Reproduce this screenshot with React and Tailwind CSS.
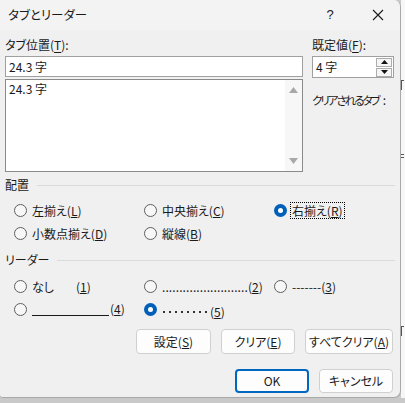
import React from "react";

const F = { fontFamily: '"Noto Sans CJK JP", "Noto Sans", sans-serif' };

function Radio({ checked }) {
  return checked ? (
    <span className="w-[13px] h-[13px] rounded-full bg-[#005fb8] flex items-center justify-center shrink-0">
      <span className="w-[5px] h-[5px] rounded-full bg-white" />
    </span>
  ) : (
    <span className="w-[13px] h-[13px] rounded-full border border-[#5f5f5f] bg-[#f7f7f7] shrink-0" />
  );
}

function Opt({ checked, children, focus }) {
  return (
    <div className="flex items-center gap-[5px] h-[23px] whitespace-nowrap">
      <Radio checked={checked} />
      <span className={focus ? "outline outline-1 outline-dotted outline-black px-[1px] -ml-[1px] leading-[15px]" : "leading-[15px]"}>
        {children}
      </span>
    </div>
  );
}

function Btn({ children, cls = "", def }) {
  return (
    <div
      className={
        "flex items-center justify-center rounded-[4px] bg-[#fdfdfd] text-[12px] whitespace-nowrap " +
        (def ? "border-2 border-[#0067c0] " : "border border-[#d0d0d0] ") +
        cls
      }
    >
      {children}
    </div>
  );
}

function Section({ title, cls = "" }) {
  return (
    <div className={"flex items-center h-[16px] " + cls}>
      <span>{title}</span>
      <span className="flex-1 h-px bg-[#dadada] ml-[8px] mr-[5px]" />
    </div>
  );
}

export default function App() {
  return (
    <div className="w-[405px] h-[403px] bg-[#c9c9c9] flex text-[12px] text-[#1a1a1a] [font-feature-settings:'palt']" style={F}>
      <div className="w-[401px] h-[398px] bg-[#f0f0f0] border-r border-b border-[#a8a8a8] rounded-tr-[7px] rounded-br-[7px] rounded-bl-[3px] overflow-hidden flex flex-col shrink-0">
        {/* title bar */}
        <div className="h-[30px] bg-[#f3f3f3] flex items-center pl-[8px] shrink-0">
          <span className="text-[12.5px]">タブとリーダー</span>
          <span className="ml-auto w-[12px] text-center text-[13px] mr-[36px]" style={{ fontFamily: '"Liberation Sans", sans-serif' }}>?</span>
          <svg width="12" height="12" viewBox="0 0 12 12" className="mr-[16px]">
            <path d="M1 1 L11 11 M11 1 L1 11" stroke="#1a1a1a" strokeWidth="1.1" />
          </svg>
        </div>

        <div className="flex flex-col pl-[5px]">
          {/* top area */}
          <div className="flex mt-[7px]">
            <div className="w-[298px] flex flex-col">
              <div className="h-[16px] leading-[16px]">
                タブ位置(<u className="underline-offset-2">T</u>):
              </div>
              <div className="mt-[3px] h-[21px] bg-white border border-[#a0a0a0] flex items-center pl-[3px]">24.3 字</div>
              <div className="mt-[2px] h-[93px] bg-white border border-[#8a8a8a] flex">
                <div className="flex-1 pl-[3px] pt-[1px] leading-[16px]">24.3 字</div>
                <div className="w-[17px] bg-[#f7f7f7] flex flex-col items-center justify-between py-[7px]">
                  <svg width="9" height="6" viewBox="0 0 9 6"><path d="M0 6 L4.5 0 L9 6 Z" fill="#a8a8a8" /></svg>
                  <svg width="9" height="6" viewBox="0 0 9 6"><path d="M0 0 L4.5 6 L9 0 Z" fill="#a8a8a8" /></svg>
                </div>
              </div>
            </div>
            <div className="ml-[9px] w-[82px] flex flex-col">
              <div className="h-[16px] leading-[16px]">
                既定値(<u className="underline-offset-2">F</u>):
              </div>
              <div className="mt-[3px] h-[22px] bg-white border border-[#a0a0a0] flex items-center pl-[3px]">
                <span className="flex-1">4 字</span>
                <div className="flex flex-col gap-[1px] mr-[1px]">
                  <div className="w-[16px] h-[9px] border border-[#adadad] bg-[#f5f5f5] flex items-center justify-center">
                    <svg width="7" height="4" viewBox="0 0 7 4"><path d="M0 4 L3.5 0 L7 4 Z" fill="#111" /></svg>
                  </div>
                  <div className="w-[16px] h-[9px] border border-[#adadad] bg-[#f5f5f5] flex items-center justify-center">
                    <svg width="7" height="4" viewBox="0 0 7 4"><path d="M0 0 L3.5 4 L7 0 Z" fill="#111" /></svg>
                  </div>
                </div>
              </div>
              <div className="mt-[14px] h-[16px] leading-[16px] whitespace-nowrap">
                <span className="text-[11.5px] tracking-[-2px]">クリアされるタブ</span>
                <span className="ml-[4px]">:</span>
              </div>
            </div>
          </div>

          {/* 配置 */}
          <Section title="配置" cls="mt-[5px]" />
          <div className="grid grid-cols-[130px_130px_120px] pl-[9px] mt-[6px]">
            <Opt>左揃え(<u>L</u>)</Opt>
            <Opt>中央揃え(<u>C</u>)</Opt>
            <Opt checked focus>右揃え(<u>R</u>)</Opt>
            <Opt>小数点揃え(<u>D</u>)</Opt>
            <Opt>縦線(<u>B</u>)</Opt>
          </div>

          {/* リーダー */}
          <Section title="リーダー" cls="mt-[7px]" />
          <div className="grid grid-cols-[130px_130px_120px] pl-[9px] mt-[7px]">
            <Opt>
              なし<span className="ml-[22px]">(<u>1</u>)</span>
            </Opt>
            <Opt>
              <span className="tracking-[0.1px]">.........................</span>(<u>2</u>)
            </Opt>
            <Opt>-------(<u>3</u>)</Opt>
            <Opt>
              <span className="inline-flex items-end">
                <span className="inline-block w-[77px] h-[13px] border-b border-[#1a1a1a] mr-[1px]" />
                <span>(<u>4</u>)</span>
              </span>
            </Opt>
            <Opt checked>
              <span className="inline-flex items-center">
                <span className="inline-flex items-center gap-[4px] mr-[3px] ml-[1px]">
                  {[0, 1, 2, 3, 4, 5, 6, 7].map((i) => (
                    <span key={i} className="w-[2px] h-[2px] bg-[#333]" />
                  ))}
                </span>
                <span>(<u>5</u>)</span>
              </span>
            </Opt>
          </div>

          {/* buttons */}
          <div className="flex justify-end gap-[10px] mt-[8px] pr-[7px]">
            <Btn cls="w-[75px] h-[25px]">設定(<u>S</u>)</Btn>
            <Btn cls="w-[74px] h-[25px]">クリア(<u>E</u>)</Btn>
            <Btn cls="w-[88px] h-[25px]">すべてクリア(<u>A</u>)</Btn>
          </div>
          <div className="flex justify-end gap-[10px] mt-[15px] pr-[7px]">
            <Btn def cls="w-[74px] h-[24px]">OK</Btn>
            <Btn cls="w-[74px] h-[24px]">キャンセル</Btn>
          </div>
        </div>
      </div>
      <div className="w-[4px] h-[398px] bg-[#f7f7f7] flex flex-col">
        <span className="mt-[80px] w-[3px] h-[10px] border-l border-t border-[#555]" />
        <span className="mt-[64px] w-[3px] h-[4px] border-t border-b border-[#555]" />
        <span className="mt-[168px] w-[3px] h-[10px] border-l border-t border-[#555]" />
      </div>
    </div>
  );
}
